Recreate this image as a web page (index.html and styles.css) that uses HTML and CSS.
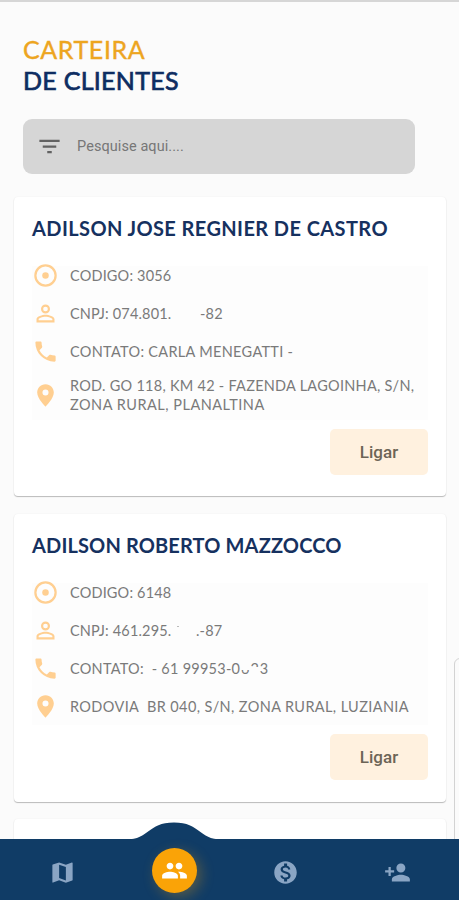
FILE: index.html
```html
<!DOCTYPE html>
<html lang="pt-BR">
<head>
<meta charset="utf-8">
<title>Carteira de Clientes</title>
<link rel="stylesheet" href="styles.css">
</head>
<body>
<svg class="defs" aria-hidden="true">
  <symbol id="code" viewBox="0 0 24 24"><path fill-rule="evenodd" d="M12 2a10 10 0 1 0 0 20 10 10 0 0 0 0-20zm0 2a8 8 0 1 1 0 16 8 8 0 0 1 0-16z"/><circle cx="12" cy="12" r="2.9"/></symbol>
  <symbol id="person" viewBox="0 0 24 24"><path d="M12 5.9a2.1 2.1 0 1 1 0 4.2 2.1 2.1 0 0 1 0-4.2m0 9c2.97 0 6.1 1.46 6.1 2.1v1.1H5.9V17c0-.64 3.13-2.1 6.1-2.1M12 4a4 4 0 1 0 0 8 4 4 0 0 0 0-8zm0 9c-2.67 0-8 1.34-8 4v3h16v-3c0-2.66-5.33-4-8-4z"/></symbol>
  <symbol id="phone" viewBox="0 0 24 24"><path d="M6.62 10.79c1.44 2.83 3.76 5.14 6.59 6.59l2.2-2.2c.27-.27.67-.36 1.02-.24 1.12.37 2.33.57 3.57.57.55 0 1 .45 1 1V20c0 .55-.45 1-1 1C10.61 21 3 13.39 3 4c0-.55.45-1 1-1h3.5c.55 0 1 .45 1 1 0 1.25.2 2.45.57 3.57.11.35.03.74-.25 1.02l-2.2 2.2z"/></symbol>
  <symbol id="place" viewBox="0 0 24 24"><path d="M12 2C7.6 2 4.6 5.4 4.6 9.4 4.6 14.800 12 22 12 22s7.400-7.200 7.400-12.600C19.400 5.400 16.400 2 12 2zm0 10a2.700 2.700 0 1 1 0-5.400 2.700 2.700 0 0 1 0 5.400z"/></symbol>
</svg>
<div class="screen">
  <main class="content">
    <h1 class="title"><span class="title-top">CARTEIRA</span><span class="title-bottom">DE CLIENTES</span></h1>
    <div class="search">
      <svg class="icon filter" viewBox="0 0 24 24"><path d="M10 18h4v-2h-4v2zM3 6v2h18V6H3zm3 7h12v-2H6v2z"/></svg>
      <span class="placeholder">Pesquise aqui....</span>
    </div>
    <section class="cards">
      <article class="card">
        <h2 class="name name-wide">ADILSON JOSE REGNIER DE CASTRO</h2>
        <ul class="list">
          <li class="row"><svg class="icon"><use href="#code"/></svg><span>CODIGO: 3056</span></li>
          <li class="row"><svg class="icon"><use href="#person"/></svg><span class="cnpj"><span class="cnpj-start">CNPJ: 074.801.</span><span>-82</span></span></li>
          <li class="row"><svg class="icon"><use href="#phone"/></svg><span class="contact">CONTATO: CARLA MENEGATTI -</span></li>
          <li class="row row-tall"><svg class="icon"><use href="#place"/></svg><span class="address">ROD. GO 118, KM 42 - FAZENDA LAGOINHA, S/N,<br><span class="region">ZONA RURAL, PLANALTINA</span></span></li>
        </ul>
        <button class="call">Ligar</button>
      </article>
      <article class="card card-next">
        <h2 class="name">ADILSON ROBERTO MAZZOCCO</h2>
        <ul class="list">
          <li class="row"><svg class="icon"><use href="#code"/></svg><span>CODIGO: 6148</span></li>
          <li class="row"><svg class="icon"><use href="#person"/></svg><span class="cnpj"><span class="cnpj-start">CNPJ: 461.295.<i class="speck"></i></span><span class="dotted">.-87</span></span></li>
          <li class="row"><svg class="icon"><use href="#phone"/></svg><span class="phone-number">CONTATO:&nbsp; - 61 99953-<span class="worn">0623</span></span></li>
          <li class="row"><svg class="icon"><use href="#place"/></svg><span class="road">RODOVIA&nbsp; BR 040, S/N, ZONA RURAL, LUZIANIA</span></li>
        </ul>
        <button class="call">Ligar</button>
      </article>
      <article class="card"></article>
    </section>
  </main>
  <div class="side-panel"></div>
  <nav class="nav">
    <svg class="hump" viewBox="0 0 96 18"><path d="M0 18V17.500C24 17.500 21 .5 48 .5S72 17.500 96 17.500V18z"/></svg>
    <a class="tab"><svg class="icon" viewBox="0 0 24 24"><path d="M20.500 3l-.16.03L15 5.100 9 3 3.360 4.900c-.21.07-.36.25-.36.48V20.500c0 .28.22.5.5.5l.16-.03L9 18.900l6 2.100 5.640-1.900c.21-.07.36-.25.36-.48V3.500c0-.28-.22-.5-.5-.5zM15 19l-6-2.110V5l6 2.110V19z"/></svg></a>
    <a class="tab"><span class="active"><svg class="icon" viewBox="0 0 24 24"><path d="M16 11c1.660 0 2.990-1.340 2.990-3S17.660 5 16 5s-3 1.340-3 3 1.340 3 3 3zm-8 0c1.660 0 2.990-1.340 2.990-3S9.660 5 8 5 5 6.340 5 8s1.340 3 3 3zm0 2c-2.330 0-7 1.170-7 3.500V19h14v-2.500c0-2.330-4.670-3.500-7-3.500zm8 0c-.29 0-.62.02-.97.05 1.160.84 1.970 1.970 1.970 3.450V19h6v-2.500c0-2.330-4.670-3.500-7-3.500z"/></svg></span></a>
    <a class="tab"><svg class="icon" viewBox="0 0 24 24"><path d="M12 2C6.480 2 2 6.480 2 12s4.480 10 10 10 10-4.480 10-10S17.520 2 12 2zm1.410 16.090V20h-2.670v-1.930c-1.710-.36-3.160-1.460-3.270-3.400h1.960c.1 1.050.82 1.870 2.650 1.870 1.960 0 2.400-.98 2.400-1.590 0-.83-.44-1.610-2.670-2.140-2.480-.6-4.180-1.620-4.180-3.670 0-1.720 1.390-2.840 3.110-3.210V4h2.670v1.950c1.860.45 2.790 1.860 2.850 3.390H14.300c-.05-1.110-.64-1.870-2.220-1.870-1.500 0-2.400.68-2.400 1.640 0 .84.65 1.390 2.670 1.910s4.180 1.390 4.180 3.910c-.01 1.830-1.380 2.830-3.120 3.160z"/></svg></a>
    <a class="tab"><svg class="icon" viewBox="0 0 24 24"><path d="M15 12a4 4 0 1 0 0-8 4 4 0 0 0 0 8zm-9-2V7H4v3H1v2h3v3h2v-3h3v-2H6zm9 4c-2.670 0-8 1.340-8 4v2h16v-2c0-2.660-5.330-4-8-4z"/></svg></a>
  </nav>
</div>
</body>
</html>
```
FILE: styles.css
```css
* { box-sizing: border-box; }
body { margin: 0; background: #fbfbfb; font-family: Lato, "Noto Sans", sans-serif; }
.defs { position: absolute; width: 0; height: 0; }
.screen { position: relative; display: flex; flex-direction: column; height: 900px; overflow: hidden; border-top: 2px solid #d6d6d6; }
.content { flex: 1; min-height: 0; overflow: hidden; padding-top: 32px; }
.title { margin: 0 23px; font-size: 25px; line-height: 31px; font-weight: 400; }
.title span { display: block; width: max-content; }
.title-top { color: #eda51f; letter-spacing: .6px; -webkit-text-stroke: .4px #eda51f; }
.title-bottom { color: #0e2d62; letter-spacing: .28px; -webkit-text-stroke: .7px #0e2d62; }
.search { display: flex; align-items: center; width: 392px; height: 55px; margin: 23px 0 0 23px; padding-left: 13px; border-radius: 9px; background: #d6d6d6; }
.icon { display: block; flex: none; width: 27px; height: 27px; fill: currentColor; }
.filter { color: #626262; }
.placeholder { margin-left: 14px; color: #777; font: 14.5px/20px Roboto, sans-serif; letter-spacing: .07px; }
.cards { display: flex; flex-direction: column; gap: 18px; padding: 23px 13px 0 14px; }
.card { flex: none; min-height: 120px; padding: 16px 18px 21px; border-radius: 4px; background: #fff; box-shadow: 0 1px 1px rgba(0,0,0,.25), 0 0 2px rgba(0,0,0,.06); }
.card-next { padding-bottom: 22px; margin-bottom: -1px; }
.name { margin: 0 0 13px; color: #16315f; font-size: 20px; line-height: 30px; font-weight: 700; letter-spacing: .14px; white-space: nowrap; }
.name-wide { letter-spacing: .4px; }
.list { margin: 0; padding: 0; list-style: none; background: linear-gradient(#fff 10px, #fdfdfd 10px); }
.row { display: flex; align-items: center; gap: 11px; height: 38px; color: #7a7a7a; font-size: 14.500px; line-height: 19px; letter-spacing: .17px; white-space: nowrap; }
.row-tall { height: 50px; }
.row .icon { color: #ffcf91; }
.contact { letter-spacing: .31px; }
.address { letter-spacing: .26px; }
.region { letter-spacing: .5px; }
.road { letter-spacing: .38px; }
.phone-number { letter-spacing: .25px; }
.cnpj { display: flex; }
.cnpj-start { position: relative; width: 130px; }
.dotted { margin-left: -4px; }
.speck { position: absolute; left: 107px; top: 5px; width: 2px; height: 1px; background: #bbb; }
.worn { position: relative; letter-spacing: 1px; }
.worn::before, .worn::after { content: ""; position: absolute; background: #fdfdfd; }
.worn::before { left: 9px; top: 2px; width: 9px; height: 8px; }
.worn::after { left: 18px; top: 7px; width: 9px; height: 9px; }
.call { display: block; width: 98px; height: 46px; margin: 9px 0 0 auto; padding: 0; border: 0; border-radius: 5px; background: #fff1df; color: #6c6456; font: 500 17px/46px Roboto, sans-serif; }
.side-panel { position: absolute; left: 454px; top: 656px; width: 12px; height: 190px; border: 1px solid #d3d3d3; border-radius: 6px; background: #fbfbfb; }
.nav { position: relative; display: flex; flex: none; height: 61px; padding: 0 5.500px 0 6.500px; background: #103c66; color: #8aa5c4; }
.hump { position: absolute; left: 126px; top: -17px; width: 96px; height: 18px; fill: #103c66; }
.tab { position: relative; display: flex; flex: 1; align-items: center; justify-content: center; padding-top: 5px; }
.active { display: flex; align-items: center; justify-content: center; width: 45px; height: 45px; margin-top: -4px; border-radius: 50%; background: #faa307; color: #fff; box-shadow: 4px 4px 14px rgba(250,163,7,.3); }
```
